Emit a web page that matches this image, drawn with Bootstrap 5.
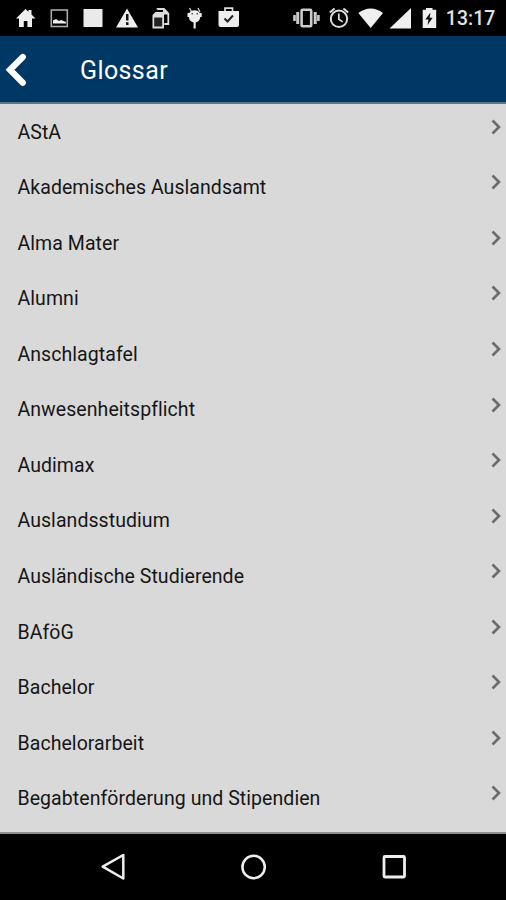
<!DOCTYPE html>
<html lang="de">
<head>
<meta charset="utf-8">
<meta name="viewport" content="width=device-width, initial-scale=1">
<title>Glossar</title>
<link href="https://cdn.jsdelivr.net/npm/bootstrap@5.3.0/dist/css/bootstrap.min.css" rel="stylesheet">
<style>
body { font-family: Roboto, "Liberation Sans", sans-serif; background: #000; }
.screen { width: 506px; height: 900px; }
.status { height: 36px; padding-left: 9px; padding-right: 10.5px; color: #e2e2e2; }
.clock { font-size: 19.4px; font-weight: 500; line-height: 36px; padding-top: 1px; letter-spacing: .1px; }
.appbar { height: 68px; padding-top: 2px; background: #003865; border-bottom: 2px solid #5f7488; }
.appbar h1 { font-size: 25px; font-weight: 400; margin-left: 53px; padding-top: 2px; letter-spacing: .4px; }
.terms { background: #d9d9d9; border-bottom: 2px solid #8e8e8e; }
.term { height: 55.55px; padding: 0 5px 0 17.5px; font-size: 19.5px; color: #161616; letter-spacing: .06px; }
.term span { padding-top: 1px; }
.term svg { margin-bottom: 10px; }
.sysnav { height: 66px; padding-left: 100px; padding-right: 99px; }
</style>
</head>
<body>
<div class="screen d-flex flex-column overflow-hidden">
  <div class="status d-flex justify-content-between flex-shrink-0">
    <div class="d-flex">
      <svg width="33" height="36" viewBox="9 0 33 36" fill="#eee"><path d="M25.500 9L16 18.500h3V27h4.800v-6h3.600v6H32v-8.500h3.500l-4-4V10h-3v1.800z"/></svg>
      <svg width="34" height="36" viewBox="42 0 34 36" fill="none" stroke="#aaa" stroke-width="1.600"><rect x="51.300" y="10" width="16" height="16.500"/><path d="M53 23.500v-3l3-1.500 3 2 2-1 5 2v1.500z" fill="#eee" stroke="none"/></svg>
      <svg width="34" height="36" viewBox="76 0 34 36"><rect x="83.500" y="9" width="19" height="18" fill="#eaeaea"/></svg>
      <svg width="34" height="36" viewBox="110 0 34 36" fill="#eee"><path d="M127 8.500L138 27.500H116z"/><path d="M126 14h2.500v6.500H126zM126 22.300h2.500v2.700H126z" fill="#111"/></svg>
      <svg width="34" height="36" viewBox="144 0 34 36"><path d="M157.500 9.500V9h6.500l4.300 4.500V24h-4" fill="none" stroke="#ddd" stroke-width="1.800"/><path d="M163 8.500l6 6h-6z" fill="#ddd"/><path d="M155.500 12H164v16.500h-11.500V15z" fill="#ddd"/><path d="M154.200 17.500h8V26.500h-8z" fill="#222"/></svg>
      <svg width="34" height="36" viewBox="178 0 34 36"><path d="M198.500 8l2 4M190 8l2 3.500" transform="translate(-.5 0)" stroke="#ddd" stroke-width="1.200"/><path d="M187.500 13h1.800c1-2 3-2.700 5.200-2.700s4.200.7 5.200 2.700h2v4h-1.500c0 3-2 5-4.500 5.500V28.500h-2.100V22.500c-2.500-.5-4.700-2.500-4.700-5.500h-1.400z" fill="#eee"/><path d="M191.500 13h1.500v1.500h-1.500zM196.500 13h1.500v1.500h-1.500z" fill="#555"/></svg>
      <svg width="34" height="36" viewBox="212 0 34 36"><path d="M225 12V8.200h7.500V12" fill="none" stroke="#ddd" stroke-width="1.700"/><path d="M218.500 11h20.500v14q0 2-2 2h-16.500q-2 0-2-2z" fill="#eee"/><path d="M224.500 18.500l3 3 5.500-6" fill="none" stroke="#222" stroke-width="2"/></svg>
    </div>
    <div class="d-flex">
      <svg width="33" height="36" viewBox="290 0 33 36" fill="none" stroke="#ccc"><rect x="301.600" y="9.700" width="9.600" height="16.600" rx="1" stroke-width="2.600"/><path d="M297.700 12v12M315.200 12v12" stroke-width="3"/><path d="M294.500 15v6M318.400 15v6" stroke-width="2.600"/></svg>
      <svg width="32" height="36" viewBox="323 0 32 36" fill="none" stroke="#ddd" stroke-width="2"><circle cx="339" cy="18.800" r="8.200"/><path d="M338.800 13.500v5.700l4 2.700" stroke-width="1.700"/><path d="M329.800 12.500l4.800-4M348.200 12.500l-4.800-4"/></svg>
      <svg width="30" height="36" viewBox="355 0 30 36"><path d="M358.300 13Q364.200 8.500 370.700 8.500T383 13L370.700 28z" fill="#f0f0f0"/></svg>
      <svg width="30" height="36" viewBox="385 0 30 36"><path d="M411 8v20.500H389.500z" fill="#f0f0f0"/></svg>
      <svg width="31" height="36" viewBox="415 0 31 36"><path d="M426 8h6.500v1.700h3.700V28h-13.500V9.700H426z" fill="#eee"/><path d="M430.500 12.500l-5.200 7h3.200l-1 5.500 5.200-7.200h-3z" fill="#111"/></svg>
      <div class="clock">13:17</div>
    </div>
  </div>
  <header class="appbar d-flex align-items-center flex-shrink-0 text-white">
    <svg width="27" height="40" viewBox="0 50 27 40" fill="none" stroke="#fff" stroke-width="6.200" stroke-linecap="round"><path d="M22.800 57L10 69.800 22.800 82.700"/></svg>
    <h1 class="mb-0">Glossar</h1>
  </header>
  <main class="terms flex-grow-1 overflow-hidden" id="terms"></main>
  <nav class="sysnav d-flex justify-content-between align-items-center flex-shrink-0">
    <svg width="27" height="30" viewBox="100 852 27 30" fill="none" stroke="#eee" stroke-width="2.500" stroke-linejoin="round"><path d="M123.300 855v23.500L102.700 866.700z"/></svg>
    <svg width="27" height="30" viewBox="240 852 27 30" fill="none" stroke="#eee" stroke-width="2.500"><circle cx="253.600" cy="867" r="11.200"/></svg>
    <svg width="27" height="30" viewBox="380 852 27 30" fill="none" stroke="#eee" stroke-width="2.800"><rect x="384" y="856.500" width="20.500" height="20.500" rx="1"/></svg>
  </nav>
</div>
<script src="https://cdn.jsdelivr.net/npm/bootstrap@5.3.0/dist/js/bootstrap.bundle.min.js"></script>
<script>
const terms = ["AStA", "Akademisches Auslandsamt", "Alma Mater", "Alumni", "Anschlagtafel", "Anwesenheitspflicht", "Audimax", "Auslandsstudium", "Ausländische Studierende", "BAföG", "Bachelor", "Bachelorarbeit", "Begabtenförderung und Stipendien"];
document.getElementById("terms").innerHTML = terms.map(t =>
  `<div class="term d-flex align-items-center justify-content-between"><span>${t}</span><svg width="10" height="16" viewBox="0 0 10 16" fill="none" stroke="#6b6b6b" stroke-width="2.600"><path d="M1.500 1.500L8 8l-6.500 6.500"/></svg></div>`).join("");
</script>
</body>
</html>
